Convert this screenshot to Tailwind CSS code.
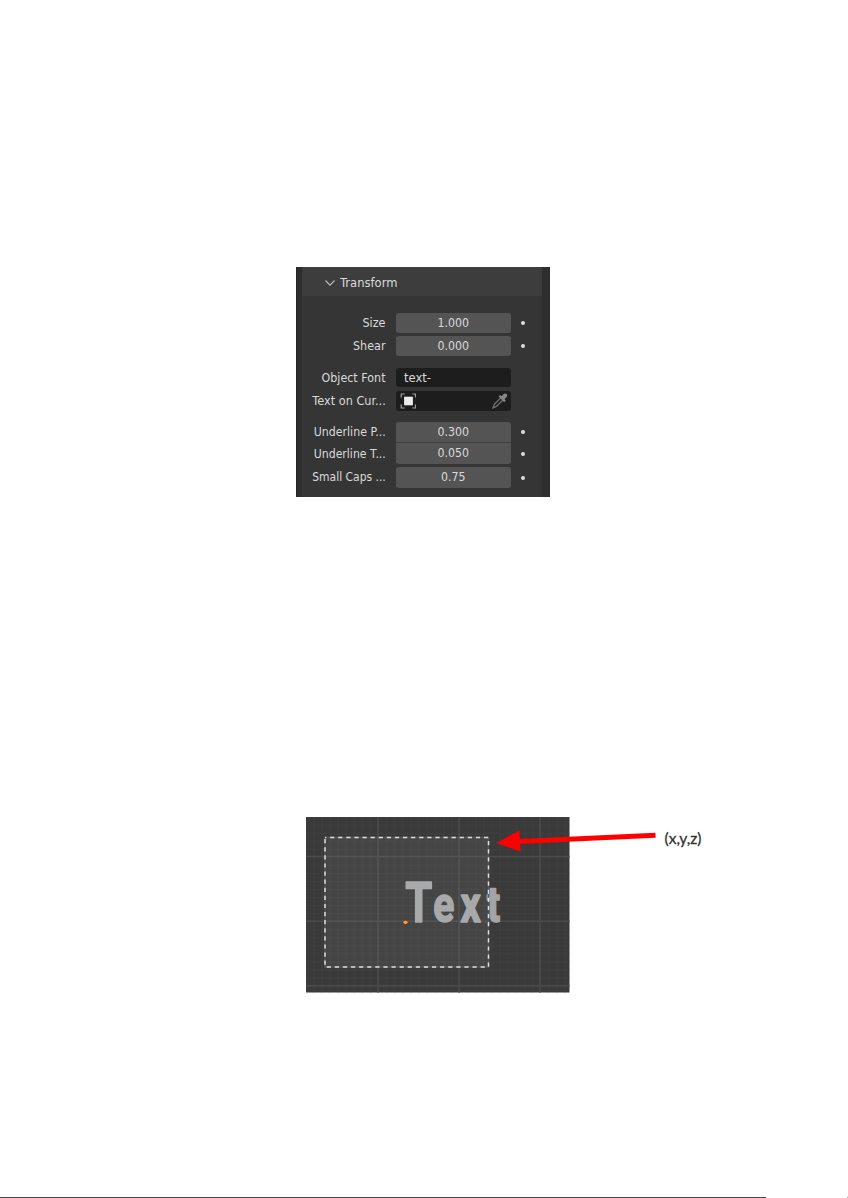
<!DOCTYPE html>
<html lang="en">
<head>
<meta charset="utf-8">
<title>Text object transform</title>
<script src="https://cdn.jsdelivr.net/npm/@tailwindcss/browser@4"></script>
</head>
<body class="bg-white">
<main class="flex h-[1198px] w-[848px] flex-col overflow-hidden bg-white pt-[267px]">
  <section class="ml-[296px] h-[230px] w-[254px] shrink-0 border-l border-[#252525] bg-[#2e2e2e] pl-[5px] font-['DejaVu_Sans',sans-serif] text-[12px] text-[#dadada]">
    <div class="h-[230px] w-[240px] bg-[#353535]">
      <header class="flex h-[29px] items-center gap-[5px] bg-[#3d3d3d] pt-[3px] pl-[23px]">
        <svg class="h-[10px] w-[10px]" viewBox="0 0 10 10" fill="none" stroke="#bdbdbd" stroke-width="1.1"><path d="M.5 2.5 5 7.2 9.5 2.5"/></svg>
        <svg class="h-[18px] w-[80px]" fill="#dadada"><text x="0" y="13.3" textLength="57.5" lengthAdjust="spacingAndGlyphs">Transform</text></svg>
      </header>
      <div class="mt-[17px] flex h-5 items-center">
        <svg class="h-5 w-[88px]" fill="#dadada"><text x="60.5" y="14.3" textLength="23" lengthAdjust="spacingAndGlyphs">Size</text></svg>
        <svg class="ml-[6px] h-5 w-[115px] rounded-[3px] bg-[#545454]" fill="#dadada"><text x="41.5" y="14.3" textLength="31.5" lengthAdjust="spacingAndGlyphs">1.000</text></svg>
        <i class="ml-[10px] size-1 rounded-full bg-[#dddddd]"></i>
      </div>
      <div class="mt-[3px] flex h-5 items-center">
        <svg class="h-5 w-[88px]" fill="#dadada"><text x="51" y="14.3" textLength="32.5" lengthAdjust="spacingAndGlyphs">Shear</text></svg>
        <svg class="ml-[6px] h-5 w-[115px] rounded-[3px] bg-[#545454]" fill="#dadada"><text x="41.5" y="14.3" textLength="31.5" lengthAdjust="spacingAndGlyphs">0.000</text></svg>
        <i class="ml-[10px] size-1 rounded-full bg-[#dddddd]"></i>
      </div>
      <div class="mt-[12px] flex h-[19px] items-center">
        <svg class="h-[19px] w-[88px]" fill="#dadada"><text x="19.5" y="14" textLength="64" lengthAdjust="spacingAndGlyphs">Object Font</text></svg>
        <svg class="ml-[6px] h-[19px] w-[115px] rounded-[3px] bg-[#1d1d1d]" fill="#dadada"><text x="8" y="14" textLength="27" lengthAdjust="spacingAndGlyphs">text-</text></svg>
      </div>
      <div class="mt-[4px] flex h-5 items-center">
        <svg class="h-5 w-[88px]" fill="#dadada"><text x="10.3" y="14.3" textLength="73.5" lengthAdjust="spacingAndGlyphs">Text on Cur...</text></svg>
        <div class="ml-[6px] flex h-5 w-[115px] items-center justify-between rounded-[3px] bg-[#1d1d1d] pr-[3px] pl-[4px]">
          <svg class="h-4 w-4" viewBox="0 0 16 16" fill="none" stroke="#a0a0a0" stroke-width="1.2"><path d="M1.2 4.5V1h3.5M12.3 1h3.2v3.5M15.5 11.5V15h-3.2M4.7 15H1.2v-3.5"/><rect x="4.1" y="3.7" width="8.8" height="8.6" fill="#ececec" stroke="none"/></svg>
          <svg class="h-4 w-4" viewBox="0 0 16 16" fill="none"><path d="M9 4.6 2.4 11.2 1 14.8 4.4 13.4 11.2 6.8" stroke="#707070" stroke-width="1.3"/><path d="M6.6 3.4 8.2 2 9.5 3.2 11.8 1c1.9-1.5 4.5.8 3 2.8L12.6 6.2 13.8 7.7 12.2 9.2Z" fill="#858585"/></svg>
        </div>
      </div>
      <div class="mt-[11px] flex h-[21px] items-center">
        <svg class="h-[21px] w-[88px]" fill="#dadada"><text x="11.8" y="14.3" textLength="72" lengthAdjust="spacingAndGlyphs">Underline P...</text></svg>
        <svg class="ml-[6px] h-[21px] w-[115px] rounded-t-[3px] border-b border-[#414141] bg-[#545454]" fill="#dadada"><text x="41.5" y="14.3" textLength="31.5" lengthAdjust="spacingAndGlyphs">0.300</text></svg>
        <i class="mb-[1px] ml-[10px] size-1 rounded-full bg-[#dddddd]"></i>
      </div>
      <div class="flex h-[21px] items-center">
        <svg class="h-[21px] w-[88px]" fill="#dadada"><text x="11.8" y="15" textLength="72" lengthAdjust="spacingAndGlyphs">Underline T...</text></svg>
        <svg class="ml-[6px] h-[21px] w-[115px] rounded-b-[3px] bg-[#545454]" fill="#dadada"><text x="41.5" y="14.3" textLength="31.5" lengthAdjust="spacingAndGlyphs">0.050</text></svg>
        <i class="ml-[10px] size-1 rounded-full bg-[#dddddd]"></i>
      </div>
      <div class="mt-[3px] flex h-[21px] items-center">
        <svg class="h-[21px] w-[88px]" fill="#dadada"><text x="10.3" y="14.4" textLength="73.5" lengthAdjust="spacingAndGlyphs">Small Caps ...</text></svg>
        <svg class="ml-[6px] h-[21px] w-[115px] rounded-[3px] bg-[#545454]" fill="#dadada"><text x="45" y="14.4" textLength="24.5" lengthAdjust="spacingAndGlyphs">0.75</text></svg>
        <i class="ml-[10px] size-1 rounded-full bg-[#dddddd]"></i>
      </div>
    </div>
  </section>

  <svg class="mt-[303px] ml-[296px] h-[210px] w-[430px] shrink-0" viewBox="296 800 430 210">
    <defs>
      <pattern id="grid" x="305.2" y="848.8" width="8.1" height="8.05" patternUnits="userSpaceOnUse"><path d="M0 .5H8.1M.5 0V8.05" stroke="#414141" stroke-width="1"/></pattern>
    </defs>
    <rect x="306" y="817" width="263.5" height="175.5" fill="#3a3a3a"/>
    <rect x="306" y="817" width="263.5" height="175.5" fill="url(#grid)" opacity=".6"/>
    <path d="M378 817V992.5M459 817V992.5M540 817V992.5M306 856.5H569.5M306 921.3H569.5M306 985.8H569.5" stroke="#4a4a4a" stroke-width="1.6"/>
    <g transform="translate(0 922) scale(.78 1)" font-family="Roboto, sans-serif" font-weight="700" fill="#a3a4a5" stroke="#a3a4a5" stroke-width="1.6" stroke-linejoin="round">
      <text y="0"><tspan x="519.5" font-size="56">T</tspan><tspan x="555.5" font-size="50">e</tspan><tspan x="590.5" font-size="51">x</tspan><tspan x="624.5" font-size="50">t</tspan></text>
    </g>
    <rect x="325" y="837.5" width="163.5" height="129.5" fill="#ffffff" fill-opacity=".06"/>
    <rect x="325" y="837.5" width="163.5" height="129.5" fill="none" stroke="#555555" stroke-width="1.5"/>
    <rect x="325" y="837.5" width="163.5" height="129.5" fill="none" stroke="#dedede" stroke-width="1.5" stroke-dasharray="4.2 3.9" stroke-dashoffset="3"/>
    <ellipse cx="405.5" cy="922.3" rx="2.6" ry="2.1" fill="#ff9d2e" stroke="#3a2a1a" stroke-width=".6"/>
    <path d="M519 841.5 655.5 835.3" stroke="#ff0000" stroke-width="5"/>
    <path d="M496.5 843 519.5 830.5 520.5 851.5Z" fill="#ff0000"/>
    <text x="664.5" y="843.5" font-family="Lato, sans-serif" font-size="15" fill="#333333" stroke="#333333" stroke-width=".3" textLength="37" lengthAdjust="spacingAndGlyphs">(x,y,z)</text>
  </svg>

  <footer class="mt-[187px] flex h-px w-full shrink-0 justify-between"><div class="h-px w-[766px] bg-[#484848]"></div><div class="h-px w-px bg-[#999999]"></div></footer>
</main>
</body>
</html>
